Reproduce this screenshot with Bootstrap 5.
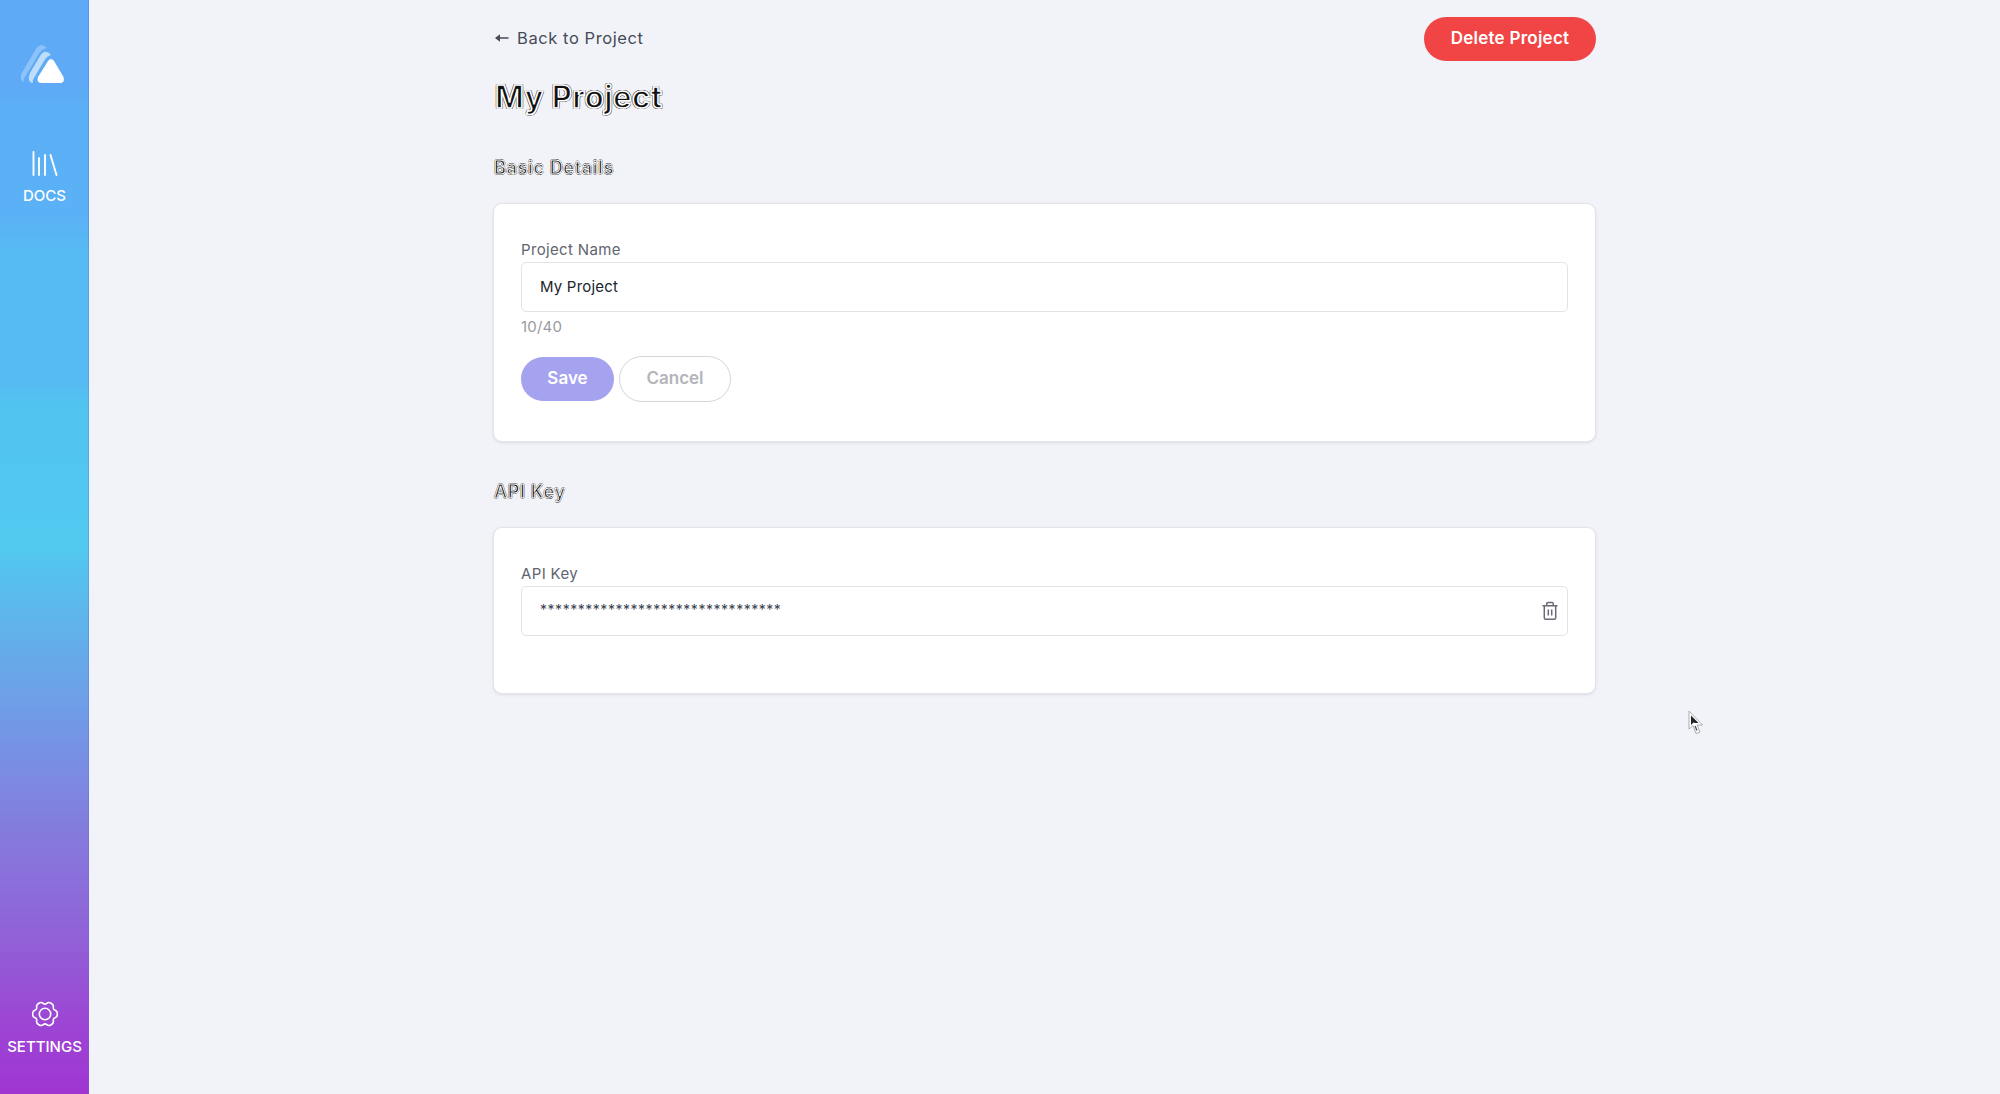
<!DOCTYPE html>
<html lang="en">
<head>
<meta charset="utf-8">
<meta name="viewport" content="width=device-width, initial-scale=1">
<title>My Project</title>
<link href="https://cdn.jsdelivr.net/npm/bootstrap@5.3.0/dist/css/bootstrap.min.css" rel="stylesheet">
<style>
body{background:#f2f3f9;font-family:Inter,"Liberation Sans",sans-serif;color:#374151;height:100vh;overflow:hidden}
.side-rail{width:89px;background:linear-gradient(180deg,#5eaaf6 0,#5eaaf6 8%,#5bb0f5 10%,#5bb1f5 20%,#56baf3 23%,#56bbf3 35%,#52c4f0 37%,#51c9ef 50%,#62b0ea 58%,#7693e5 68%,#8678dc 77%,#9160d7 86%,#9c47d4 93%,#a035d2 100%);border-right:1px solid rgba(90,110,220,.35);padding:44px 0 37px}
.rail-link{color:#fff;font-size:15px;line-height:20px;font-weight:500;text-decoration:none;margin-left:1px}
.brand-mark{margin-left:20px}
.docs-link{margin-top:67px;gap:9px}
.settings-link{gap:10px}
.page-column{width:1103px;margin-left:404px;padding-top:17px}
.back-link{color:#454b57;font-size:16.5px;line-height:24px;text-decoration:none;letter-spacing:.58px;gap:8px;margin-left:2px;margin-bottom:2px}
.pill-btn{--bs-btn-border-radius:50rem;height:44px;font-size:17px;font-weight:600;padding:0 0 2px;line-height:1}
.delete-btn{width:172px;background:#f04445;color:#fff;border:0;letter-spacing:.25px}
.save-btn,.save-btn:disabled{width:93px;background:#a5a2ef;color:#fff;border:0;opacity:1}
.cancel-btn,.cancel-btn:disabled{width:112px;height:46px;background:#fff;color:#b3b5ba;border:1px solid #d5d5da;opacity:1}
.glow-title{color:#111;margin:0}
.project-title{font-size:31px;line-height:40px;margin:16px 0 0 2px;font-weight:700;letter-spacing:.5px;-webkit-text-stroke:1.6px #fff;text-shadow:1px 0 #444,-1px 0 #444,0 1px #444,0 -1px #444,1px 1px #444,-1px -1px #444,1px -1px #444,-1px 1px #444}
.section-title{font-size:18px;line-height:24px;margin:39px 0 23px 1px;font-weight:600;letter-spacing:.65px;-webkit-text-stroke:1px #fff;text-shadow:.7px 0 #222,-.7px 0 #222,0 .7px #222,0 -.7px #222}
.key-title{margin-top:38px}
.panel{--bs-card-border-radius:9px;--bs-card-border-color:#e3e4e9;box-shadow:0 1px 3px rgba(40,40,60,.1);padding:34px 27px 0}
.details-panel{height:239px}
.key-panel{height:167px}
.field-label{font-size:15px;line-height:23px;height:24px;color:#61656f;letter-spacing:.35px}
.field-box{border:1px solid #e2e3e7;border-radius:5px;height:50px;font-size:15px;line-height:24px;color:#20242d;padding:0 9px 0 18px;letter-spacing:.2px}
.key-dots{font-size:14px;color:#39424f;letter-spacing:.53px;margin-bottom:3px}
.counter{font-size:15px;line-height:20px;color:#989ba2;margin-top:5px;letter-spacing:.2px}
.form-actions{gap:5px;margin-top:19px}
.mouse-pointer{left:1686px;top:709px}
</style>
</head>
<body>
<div class="d-flex h-100">
<nav class="side-rail d-flex flex-column flex-shrink-0">
<a href="#" class="brand-mark lh-1" aria-label="Home"><svg class="d-block" width="45" height="40" viewBox="0 0 45 40"><path d="M1 35Q0 31 3 27L16 5Q21-2 27 4Q21 5 18 11L5 33Q3 36 4 38Q2 38 1 35Z" fill="#fff" fill-opacity=".3"/><path d="M9 36Q8 33 10 29L20 12Q25 4 31 11Q27 12 24 17L14 34Q12 37 13 39Q10 39 9 36Z" fill="#fff" fill-opacity=".6"/><path d="M28 17Q31 13 34 17L43.500 33Q45 39 40 39H22Q16 39 18 33Z" fill="#fff"/></svg></a>
<a href="#" class="rail-link docs-link d-flex flex-column align-items-center"><svg width="28" height="26" viewBox="0 0 28 26" fill="none" stroke="#fff" stroke-width="1.900" stroke-linecap="round"><path d="M2.500 1V24M8 7V24M14 4V24M19.500 4L25.500 24"/></svg><span>DOCS</span></a>
<a href="#" class="rail-link settings-link mt-auto d-flex flex-column align-items-center"><svg width="26" height="26" viewBox="0 0 26 26" fill="none" stroke="#fff" stroke-width="1.600" stroke-linejoin="round"><circle cx="13" cy="13" r="5.700"/><path d="M25.400 13Q25.400 16.100 23.100 16.800Q20.800 17.500 21.350 19.850Q21.900 22.200 19.200 23.750Q16.500 25.300 14.750 23.650Q13 22 11.250 23.650Q9.500 25.300 6.800 23.750Q4.100 22.200 4.650 19.850Q5.200 17.500 2.900 16.800Q.6 16.100 .6 13Q.6 9.900 2.900 9.200Q5.200 8.500 4.650 6.150Q4.100 3.800 6.800 2.250Q9.500 .7 11.250 2.350Q13 4 14.750 2.350Q16.500 .7 19.200 2.250Q21.900 3.800 21.350 6.150Q20.800 8.500 23.100 9.200Q25.400 9.900 25.400 13Z"/></svg><span>SETTINGS</span></a>
</nav>
<main class="page-column">
<div class="d-flex justify-content-between align-items-center"><a href="#" class="back-link d-flex align-items-center"><svg width="14" height="10" viewBox="0 0 14 10"><path d="M4 5H13.500" stroke="#454b57" stroke-width="1.500"/><path d="M0 5L5 1.200V8.800Z" fill="#454b57"/></svg><span>Back to Project</span></a><button type="button" class="btn pill-btn delete-btn">Delete Project</button></div>
<h1 class="glow-title project-title">My Project</h1>
<h2 class="glow-title section-title">Basic Details</h2>
<section class="card panel details-panel">
<div class="field-label">Project Name</div>
<div class="field-box d-flex align-items-center">My Project</div>
<div class="counter">10/40</div>
<div class="form-actions d-flex align-items-center"><button type="button" class="btn pill-btn save-btn" disabled>Save</button><button type="button" class="btn pill-btn cancel-btn" disabled>Cancel</button></div>
</section>
<h2 class="glow-title section-title key-title">API Key</h2>
<section class="card panel key-panel">
<div class="field-label">API Key</div>
<div class="field-box d-flex align-items-center justify-content-between"><span class="key-dots">********************************</span><svg width="16" height="20" viewBox="0 0 16 20" fill="none" stroke="#696b78" stroke-width="1.500"><path d="M.5 4.700H15.500M2.300 4.700V16.800Q2.300 18.300 3.800 18.300H12.200Q13.700 18.300 13.700 16.800V4.700M4.700 4.500V3Q4.700 1.500 6.200 1.500H9.800Q11.300 1.500 11.300 3V4.500M6.300 8.500V14.500M9.700 8.500V14.500"/></svg></div>
</section>
</main>
</div>
<svg class="mouse-pointer position-absolute" width="20" height="28" viewBox="0 0 20 28"><path d="M3 2V20L7 16.500L10 24.500L14 23L11 16H16.500Z" fill="#fff" stroke="#a2a3a9" stroke-width=".9"/><path d="M5 6.500V16L7.500 13.500L9 14H12.500Z" fill="#222"/><path d="M9 17L11 21.500" stroke="#555" stroke-width="1.400"/></svg>
<script src="https://cdn.jsdelivr.net/npm/bootstrap@5.3.0/dist/js/bootstrap.bundle.min.js"></script>
</body>
</html>
